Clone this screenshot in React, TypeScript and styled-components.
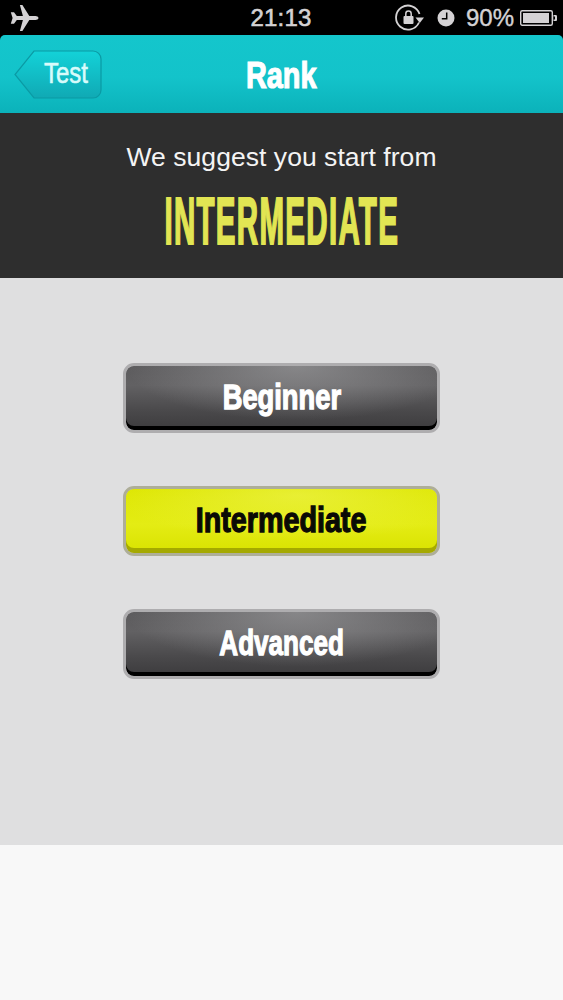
import React from 'react';
import styled, { createGlobalStyle } from 'styled-components';

const GlobalStyle = createGlobalStyle`
  html, body {
    margin: 0;
    padding: 0;
    background: #000;
  }
  * {
    box-sizing: border-box;
  }
`;

const Screen = styled.div`
  width: 563px;
  height: 1000px;
  display: flex;
  flex-direction: column;
  overflow: hidden;
  background: #000;
  font-family: 'Liberation Sans', Arial, sans-serif;
`;

const StatusBar = styled.div`
  height: 35px;
  flex: none;
  display: grid;
  grid-template-columns: 1fr auto 1fr;
  align-items: center;
  padding: 0 5px 0 10px;
  color: #d4d2d4;
`;

const StatusLeft = styled.div`
  display: flex;
  align-items: center;
`;

const StatusRight = styled.div`
  display: flex;
  align-items: center;
  justify-content: flex-end;
  gap: 11px;
`;

const Clock = styled.span`
  margin-right: 6px;
  font-size: 24px;
  font-weight: 400;
  letter-spacing: 0.2px;
  -webkit-text-stroke: 0.6px #d4d2d4;
`;

const BatteryGroup = styled.div`
  display: flex;
  align-items: center;
  gap: 6px;
`;

const Percent = styled.span`
  font-size: 24px;
  -webkit-text-stroke: 0.4px #d4d2d4;
`;

const NavBar = styled.header`
  position: relative;
  height: 78px;
  flex: none;
  display: flex;
  align-items: center;
  justify-content: center;
  border-radius: 5px 5px 0 0;
  background: linear-gradient(#14c6cc 0%, #13c3ca 55%, #0bb2ba 100%);
`;

const BackButton = styled.div`
  position: absolute;
  left: 14px;
  top: 15px;
  width: 88px;
  height: 49px;
`;

const BackLabel = styled.span`
  position: absolute;
  left: 30px;
  top: 6px;
  color: #d8fbfb;
  font-size: 30px;
  font-weight: 400;
  transform: scaleX(0.8);
  transform-origin: left center;
  -webkit-text-stroke: 0.6px #d8fbfb;
`;

const Title = styled.h1`
  margin: 4px 0 0;
  color: #fff;
  font-size: 37px;
  line-height: 40px;
  font-weight: 700;
  transform: scaleX(0.78);
  -webkit-text-stroke: 1.2px #fff;
`;

const SuggestPanel = styled.section`
  height: 165px;
  flex: none;
  display: flex;
  flex-direction: column;
  align-items: center;
  padding-top: 28px;
  background: #2e2e2e;
`;

const SuggestText = styled.p`
  margin: 0;
  color: #f4f4f4;
  font-size: 26.5px;
  line-height: 32px;
  letter-spacing: 0.05px;
`;

const RankName = styled.div`
  margin-top: 13px;
  color: #e2e553;
  font-size: 67px;
  line-height: 70px;
  font-weight: 700;
  letter-spacing: 3px;
  white-space: nowrap;
  transform: scaleX(0.44);
  -webkit-text-stroke: 2px #e2e553;
`;

const ChoicePanel = styled.main`
  height: 567px;
  flex: none;
  display: flex;
  flex-direction: column;
  align-items: center;
  gap: 53px;
  padding-top: 85px;
  background: #dfdfe0;
`;

const RankButton = styled.button<{ $active?: boolean }>`
  width: 317px;
  height: 70px;
  padding: 0 0 2px;
  display: flex;
  align-items: center;
  justify-content: center;
  border: 3px solid ${(p) => (p.$active ? '#aeae98' : '#aeadaf')};
  border-radius: 11px;
  background-clip: padding-box;
  background-color: ${(p) => (p.$active ? '#e0e800' : '#525153')};
  background-image: ${(p) =>
    p.$active
      ? 'radial-gradient(ellipse 60% 70% at 55% 10%, rgba(240,245,90,0.55), rgba(240,245,90,0)), linear-gradient(#dde600 0%, #e4ec14 55%, #d9e200 100%)'
      : 'radial-gradient(ellipse 55% 85% at 55% 0%, rgba(170,170,172,0.55), rgba(170,170,172,0)), linear-gradient(#5c5b5d 0%, #626163 30%, #4a494b 70%, #3c3b3d 100%)'};
  box-shadow: inset 0 ${(p) => (p.$active ? '-5px 0 #a5a900' : '-4px 0 #000')};
  color: ${(p) => (p.$active ? '#0a0a05' : '#fff')};
`;

const ButtonLabel = styled.span<{ $squeeze: number }>`
  display: inline-block;
  font-size: 35px;
  font-weight: 700;
  white-space: nowrap;
  transform: scaleX(${(p) => p.$squeeze});
  -webkit-text-stroke: 1.3px currentColor;
`;

const FooterSpace = styled.footer`
  flex: 1;
  background: #f8f8f8;
`;

const AirplaneIcon = () => (
  <svg width="30" height="28" viewBox="0 0 30 28">
    <path
      d="M28.5 14c0-1.300-1.600-2-3-2h-6.200L12.400 1h-2.500l3 11H6.800L4 8.300H.8L2.600 14 .8 19.700H4L6.800 16h6.100l-3 11h2.500l6.900-11h6.200c1.400 0 3-.7 3-2z"
      fill="#d4d2d4"
    />
  </svg>
);

const RotationLockIcon = () => (
  <svg width="31" height="28" viewBox="0 0 31 28">
    <path
      d="M24 18.500A12 12 0 1 1 24.500 10"
      fill="none"
      stroke="#d4d2d4"
      strokeWidth="1.800"
    />
    <path d="M20.500 13.500h8.500l-4.200 5.500z" fill="#d4d2d4" />
    <rect x="8.500" y="12" width="10" height="8" rx="1" fill="#d4d2d4" />
    <path d="M10.800 12V9.800a2.700 2.700 0 0 1 5.400 0V12" fill="none" stroke="#d4d2d4" strokeWidth="1.500" />
  </svg>
);

const AlarmIcon = () => (
  <svg width="18" height="18" viewBox="0 0 18 18">
    <circle cx="9" cy="9" r="8.500" fill="#d4d2d4" />
    <path d="M9.700 3.500v6.200H4.800" fill="none" stroke="#000" strokeWidth="1.500" />
  </svg>
);

const BatteryIcon = () => (
  <svg width="38" height="18" viewBox="0 0 38 18">
    <rect x="0.700" y="1.700" width="31.600" height="14.600" rx="1.500" fill="none" stroke="#d4d2d4" strokeWidth="1.400" />
    <rect x="3" y="4" width="26" height="10" fill="#d4d2d4" />
    <path d="M33.500 6h2.200c.8 0 1.300.6 1.300 1.300v3.400c0 .7-.5 1.300-1.300 1.300h-2.200z" fill="#d4d2d4" />
    <rect x="33.500" y="7.500" width="1.500" height="3" fill="#000" />
  </svg>
);

const BackShape = () => (
  <svg width="88" height="49" viewBox="0 0 88 49">
    <defs>
      <linearGradient id="backFill" x1="0" y1="0" x2="0" y2="1">
        <stop offset="0" stopColor="#13d2d8" />
        <stop offset="1" stopColor="#10a9b4" />
      </linearGradient>
    </defs>
    <path
      d="M20 1H79a8 8 0 0 1 8 8V40a8 8 0 0 1-8 8H20L1 24.500z"
      fill="url(#backFill)"
      stroke="#0b9aa4"
      strokeWidth="1.200"
    />
  </svg>
);

const levels = [
  { name: 'Beginner', active: false, squeeze: 0.78 },
  { name: 'Intermediate', active: true, squeeze: 0.82 },
  { name: 'Advanced', active: false, squeeze: 0.745 },
];

const App: React.FC = () => {
  return (
    <Screen>
      <GlobalStyle />
      <StatusBar>
        <StatusLeft>
          <AirplaneIcon />
        </StatusLeft>
        <Clock>21:13</Clock>
        <StatusRight>
          <RotationLockIcon />
          <AlarmIcon />
          <BatteryGroup>
            <Percent>90%</Percent>
            <BatteryIcon />
          </BatteryGroup>
        </StatusRight>
      </StatusBar>

      <NavBar>
        <BackButton>
          <BackShape />
          <BackLabel>Test</BackLabel>
        </BackButton>
        <Title>Rank</Title>
      </NavBar>

      <SuggestPanel>
        <SuggestText>We suggest you start from</SuggestText>
        <RankName>INTERMEDIATE</RankName>
      </SuggestPanel>

      <ChoicePanel>
        {levels.map((level) => (
          <RankButton key={level.name} $active={level.active}>
            <ButtonLabel $squeeze={level.squeeze}>{level.name}</ButtonLabel>
          </RankButton>
        ))}
      </ChoicePanel>

      <FooterSpace />
    </Screen>
  );
};

export default App;
